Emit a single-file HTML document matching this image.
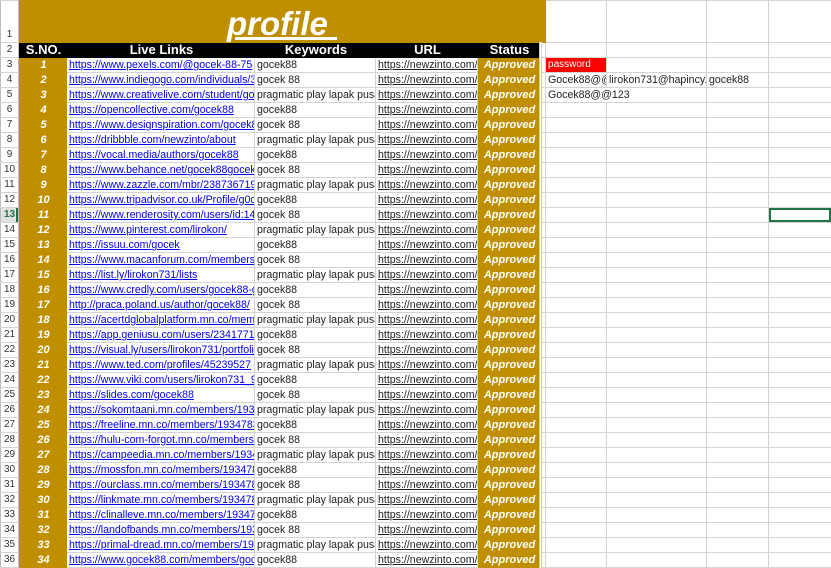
<!DOCTYPE html>
<html><head><meta charset="utf-8"><style>
body{margin:0;width:831px;height:559px;overflow:hidden;background:#fff;font-family:"Liberation Sans",sans-serif;}
table{border-collapse:collapse;table-layout:fixed;position:absolute;left:0;top:0;width:831px;}
td{padding:0 0 0 2px;height:14px;border:1px solid #d4d4d4;white-space:nowrap;overflow:hidden;text-overflow:clip;font-size:10.6px;line-height:14px;color:#222;}
td.h{text-align:center;color:#333;font-size:10px;padding:0;background:#fff;border-color:#d4d4d4 #bdbdbd;}
td.n{background:#bf8f00;color:#fff;font-weight:bold;font-style:italic;text-align:center;border-color:#bf8f00;font-size:11px;}
td.l a{color:#0000ee;text-decoration:underline;}
td.u{text-decoration:underline;color:#222;}
td.s{background:#bf8f00;color:#fff;font-weight:bold;font-style:italic;text-align:center;border-color:#bf8f00;font-size:11px;}
td.g{border-left:3px double #ccc;padding:0;}
tr.hd td{background:#000;color:#fff;font-weight:bold;font-size:13px;text-align:center;border-color:#000;}
tr.hd td.h{background:#fff;color:#333;font-weight:normal;font-size:10px;border-color:#d4d4d4 #bdbdbd;}
</style></head><body>
<table>
<colgroup><col style="width:18px"><col style="width:48px"><col style="width:188px"><col style="width:121px"><col style="width:102px"><col style="width:63px"><col style="width:5px"><col style="width:61px"><col style="width:100px"><col style="width:62px"><col style="width:63px"></colgroup>
<tr style="height:42px"><td class="h" style="height:41px;vertical-align:bottom">1</td><td colspan="6" style="background:#bf8f00;border-color:#bf8f00;text-align:center;height:41px;padding:0"><span style="position:relative;left:0px;top:2px;color:#fff;font-weight:bold;font-style:italic;font-size:33px;text-decoration:underline;line-height:38px">profile&nbsp;</span></td><td></td><td></td><td></td><td></td></tr>
<tr class="hd"><td class="h">2</td><td>S.NO.</td><td>Live Links</td><td>Keywords</td><td>URL</td><td>Status</td><td class="g" style="background:#fff;border-color:#d4d4d4"></td><td style="background:#fff;border-color:#d4d4d4"></td><td style="background:#fff;border-color:#d4d4d4"></td><td style="background:#fff;border-color:#d4d4d4"></td><td style="background:#fff;border-color:#d4d4d4"></td></tr>
<tr><td class="h">3</td><td class="n">1</td><td class="l"><a>https://www.pexels.com/@gocek-88-75</a></td><td>gocek88</td><td class="u">https://newzinto.com/</td><td class="s">Approved</td><td class="g"></td><td style="background:#f00;color:#fff;font-size:10px">password</td><td></td><td></td><td></td></tr>
<tr><td class="h">4</td><td class="n">2</td><td class="l"><a>https://www.indiegogo.com/individuals/3</a></td><td>gocek 88</td><td class="u">https://newzinto.com/</td><td class="s">Approved</td><td class="g"></td><td>Gocek88@@</td><td>lirokon731@hapincy.com</td><td>gocek88</td><td></td></tr>
<tr><td class="h">5</td><td class="n">3</td><td class="l"><a>https://www.creativelive.com/student/go</a></td><td>pragmatic play lapak pusat</td><td class="u">https://newzinto.com/</td><td class="s">Approved</td><td class="g"></td><td colspan="2">Gocek88@@123</td><td></td><td></td></tr>
<tr><td class="h">6</td><td class="n">4</td><td class="l"><a>https://opencollective.com/gocek88</a></td><td>gocek88</td><td class="u">https://newzinto.com/</td><td class="s">Approved</td><td class="g"></td><td></td><td></td><td></td><td></td></tr>
<tr><td class="h">7</td><td class="n">5</td><td class="l"><a>https://www.designspiration.com/gocek88</a></td><td>gocek 88</td><td class="u">https://newzinto.com/</td><td class="s">Approved</td><td class="g"></td><td></td><td></td><td></td><td></td></tr>
<tr><td class="h">8</td><td class="n">6</td><td class="l"><a>https://dribbble.com/newzinto/about</a></td><td>pragmatic play lapak pusat</td><td class="u">https://newzinto.com/</td><td class="s">Approved</td><td class="g"></td><td></td><td></td><td></td><td></td></tr>
<tr><td class="h">9</td><td class="n">7</td><td class="l"><a>https://vocal.media/authors/gocek88</a></td><td>gocek88</td><td class="u">https://newzinto.com/</td><td class="s">Approved</td><td class="g"></td><td></td><td></td><td></td><td></td></tr>
<tr><td class="h">10</td><td class="n">8</td><td class="l"><a>https://www.behance.net/gocek88gocek</a></td><td>gocek 88</td><td class="u">https://newzinto.com/</td><td class="s">Approved</td><td class="g"></td><td></td><td></td><td></td><td></td></tr>
<tr><td class="h">11</td><td class="n">9</td><td class="l"><a>https://www.zazzle.com/mbr/2387367190</a></td><td>pragmatic play lapak pusat</td><td class="u">https://newzinto.com/</td><td class="s">Approved</td><td class="g"></td><td></td><td></td><td></td><td></td></tr>
<tr><td class="h">12</td><td class="n">10</td><td class="l"><a>https://www.tripadvisor.co.uk/Profile/g0c</a></td><td>gocek88</td><td class="u">https://newzinto.com/</td><td class="s">Approved</td><td class="g"></td><td></td><td></td><td></td><td></td></tr>
<tr><td class="h" style="background:#e1e1e1;color:#217346;font-weight:bold;box-shadow:inset -2px 0 #217346">13</td><td class="n">11</td><td class="l"><a>https://www.renderosity.com/users/id:1412313</a></td><td>gocek 88</td><td class="u">https://newzinto.com/</td><td class="s">Approved</td><td class="g"></td><td></td><td></td><td></td><td style="box-shadow:inset 0 0 0 2px #217346"></td></tr>
<tr><td class="h">14</td><td class="n">12</td><td class="l"><a>https://www.pinterest.com/lirokon/</a></td><td>pragmatic play lapak pusat</td><td class="u">https://newzinto.com/</td><td class="s">Approved</td><td class="g"></td><td></td><td></td><td></td><td></td></tr>
<tr><td class="h">15</td><td class="n">13</td><td class="l"><a>https://issuu.com/gocek</a></td><td>gocek88</td><td class="u">https://newzinto.com/</td><td class="s">Approved</td><td class="g"></td><td></td><td></td><td></td><td></td></tr>
<tr><td class="h">16</td><td class="n">14</td><td class="l"><a>https://www.macanforum.com/members/gocek</a></td><td>gocek 88</td><td class="u">https://newzinto.com/</td><td class="s">Approved</td><td class="g"></td><td></td><td></td><td></td><td></td></tr>
<tr><td class="h">17</td><td class="n">15</td><td class="l"><a>https://list.ly/lirokon731/lists</a></td><td>pragmatic play lapak pusat</td><td class="u">https://newzinto.com/</td><td class="s">Approved</td><td class="g"></td><td></td><td></td><td></td><td></td></tr>
<tr><td class="h">18</td><td class="n">16</td><td class="l"><a>https://www.credly.com/users/gocek88-gocek</a></td><td>gocek88</td><td class="u">https://newzinto.com/</td><td class="s">Approved</td><td class="g"></td><td></td><td></td><td></td><td></td></tr>
<tr><td class="h">19</td><td class="n">17</td><td class="l"><a>http://praca.poland.us/author/gocek88/</a></td><td>gocek 88</td><td class="u">https://newzinto.com/</td><td class="s">Approved</td><td class="g"></td><td></td><td></td><td></td><td></td></tr>
<tr><td class="h">20</td><td class="n">18</td><td class="l"><a>https://acertdglobalplatform.mn.co/members</a></td><td>pragmatic play lapak pusat</td><td class="u">https://newzinto.com/</td><td class="s">Approved</td><td class="g"></td><td></td><td></td><td></td><td></td></tr>
<tr><td class="h">21</td><td class="n">19</td><td class="l"><a>https://app.geniusu.com/users/2341771</a></td><td>gocek88</td><td class="u">https://newzinto.com/</td><td class="s">Approved</td><td class="g"></td><td></td><td></td><td></td><td></td></tr>
<tr><td class="h">22</td><td class="n">20</td><td class="l"><a>https://visual.ly/users/lirokon731/portfolio</a></td><td>gocek 88</td><td class="u">https://newzinto.com/</td><td class="s">Approved</td><td class="g"></td><td></td><td></td><td></td><td></td></tr>
<tr><td class="h">23</td><td class="n">21</td><td class="l"><a>https://www.ted.com/profiles/45239527</a></td><td>pragmatic play lapak pusat</td><td class="u">https://newzinto.com/</td><td class="s">Approved</td><td class="g"></td><td></td><td></td><td></td><td></td></tr>
<tr><td class="h">24</td><td class="n">22</td><td class="l"><a>https://www.viki.com/users/lirokon731_999/about</a></td><td>gocek88</td><td class="u">https://newzinto.com/</td><td class="s">Approved</td><td class="g"></td><td></td><td></td><td></td><td></td></tr>
<tr><td class="h">25</td><td class="n">23</td><td class="l"><a>https://slides.com/gocek88</a></td><td>gocek 88</td><td class="u">https://newzinto.com/</td><td class="s">Approved</td><td class="g"></td><td></td><td></td><td></td><td></td></tr>
<tr><td class="h">26</td><td class="n">24</td><td class="l"><a>https://sokomtaani.mn.co/members/19347836</a></td><td>pragmatic play lapak pusat</td><td class="u">https://newzinto.com/</td><td class="s">Approved</td><td class="g"></td><td></td><td></td><td></td><td></td></tr>
<tr><td class="h">27</td><td class="n">25</td><td class="l"><a>https://freeline.mn.co/members/19347839</a></td><td>gocek88</td><td class="u">https://newzinto.com/</td><td class="s">Approved</td><td class="g"></td><td></td><td></td><td></td><td></td></tr>
<tr><td class="h">28</td><td class="n">26</td><td class="l"><a>https://hulu-com-forgot.mn.co/members/19347</a></td><td>gocek 88</td><td class="u">https://newzinto.com/</td><td class="s">Approved</td><td class="g"></td><td></td><td></td><td></td><td></td></tr>
<tr><td class="h">29</td><td class="n">27</td><td class="l"><a>https://campeedia.mn.co/members/19347849</a></td><td>pragmatic play lapak pusat</td><td class="u">https://newzinto.com/</td><td class="s">Approved</td><td class="g"></td><td></td><td></td><td></td><td></td></tr>
<tr><td class="h">30</td><td class="n">28</td><td class="l"><a>https://mossfon.mn.co/members/19347852</a></td><td>gocek88</td><td class="u">https://newzinto.com/</td><td class="s">Approved</td><td class="g"></td><td></td><td></td><td></td><td></td></tr>
<tr><td class="h">31</td><td class="n">29</td><td class="l"><a>https://ourclass.mn.co/members/19347854</a></td><td>gocek 88</td><td class="u">https://newzinto.com/</td><td class="s">Approved</td><td class="g"></td><td></td><td></td><td></td><td></td></tr>
<tr><td class="h">32</td><td class="n">30</td><td class="l"><a>https://linkmate.mn.co/members/19347856</a></td><td>pragmatic play lapak pusat</td><td class="u">https://newzinto.com/</td><td class="s">Approved</td><td class="g"></td><td></td><td></td><td></td><td></td></tr>
<tr><td class="h">33</td><td class="n">31</td><td class="l"><a>https://clinalleve.mn.co/members/19347866</a></td><td>gocek88</td><td class="u">https://newzinto.com/</td><td class="s">Approved</td><td class="g"></td><td></td><td></td><td></td><td></td></tr>
<tr><td class="h">34</td><td class="n">32</td><td class="l"><a>https://landofbands.mn.co/members/19347868</a></td><td>gocek 88</td><td class="u">https://newzinto.com/</td><td class="s">Approved</td><td class="g"></td><td></td><td></td><td></td><td></td></tr>
<tr><td class="h">35</td><td class="n">33</td><td class="l"><a>https://primal-dread.mn.co/members/19347870</a></td><td>pragmatic play lapak pusat</td><td class="u">https://newzinto.com/</td><td class="s">Approved</td><td class="g"></td><td></td><td></td><td></td><td></td></tr>
<tr><td class="h">36</td><td class="n">34</td><td class="l"><a>https://www.gocek88.com/members/gocek88</a></td><td>gocek88</td><td class="u">https://newzinto.com/</td><td class="s">Approved</td><td class="g"></td><td></td><td></td><td></td><td></td></tr>
</table>
</body></html>
